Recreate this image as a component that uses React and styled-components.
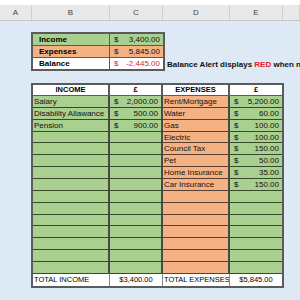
import React from 'react';
import styled, { createGlobalStyle } from 'styled-components';

const GlobalStyle = createGlobalStyle`
	html, body {
		margin: 0;
		padding: 0;
		background: #dde9f5;
		width: 300px;
		height: 300px;
		overflow: hidden;
		font-family: "Liberation Sans", Arial, sans-serif;
	}
`;

const COLS = '32px 78px 53px 67px 53px 1fr';

const Page = styled.div`
	width: 300px;
	height: 300px;
	overflow: hidden;
	background: #dde9f5;
`;

const TopStrip = styled.div`
	height: 5px;
	background: #ffffff;
`;

const ColumnBar = styled.div`
	display: grid;
	grid-template-columns: ${COLS};
	height: 15px;
	background: #e9e9e9;
	border-bottom: 1px solid #c8c8c8;
`;

const ColumnLetter = styled.div`
	display: flex;
	align-items: center;
	justify-content: center;
	font-size: 8px;
	color: #444;
	border-right: 1px solid #cfcfcf;
`;

const Sheet = styled.div`
	padding: 11px 0 0 31px;
	display: flex;
	flex-direction: column;
	gap: 12px;
`;

const SummaryRow = styled.div`
	display: flex;
	align-items: flex-end;
`;

const Summary = styled.div`
	display: grid;
	grid-template-columns: 77px 53px;
	border: 2px solid #5b5b5b;
	width: max-content;
`;

const SummaryLabel = styled.div`
	height: 11px;
	padding-left: 6px;
	font-size: 8px;
	font-weight: bold;
	line-height: 11px;
	background: ${p => p.$bg};
	border-right: 1px solid #5b5b5b;
	border-bottom: ${p => (p.$last ? 'none' : '1px solid #5b5b5b')};
`;

const Money = styled.div`
	height: 11px;
	display: flex;
	justify-content: space-between;
	padding: 0 3px 0 4px;
	font-size: 8px;
	line-height: 11px;
	color: ${p => (p.$red ? '#d9262e' : '#111')};
	background: ${p => p.$bg};
	border-bottom: ${p => (p.$last ? 'none' : `1px solid ${p.$line || '#5b5b5b'}`)};
	white-space: nowrap;
`;

const Note = styled.div`
	padding: 0 0 0 2px;
	height: 12px;
	line-height: 12px;
	font-size: 8px;
	font-weight: bold;
	white-space: nowrap;
	color: #111;
`;

const Red = styled.span`
	color: #e0202a;
`;

const Ledger = styled.div`
	display: grid;
	grid-template-columns: 77px 53px 67px 52px;
	border: 2px solid #5b5b5b;
	width: max-content;
`;

const Head = styled.div`
	height: 10px;
	line-height: 10px;
	text-align: center;
	font-size: 7.5px;
	font-weight: bold;
	background: #fff;
	border-right: ${p => (p.$end ? 'none' : '2px solid #5b5b5b')};
	border-bottom: 1px solid #5b5b5b;
`;

const Cell = styled.div`
	height: 10.87px;
	line-height: 11px;
	padding-left: 1px;
	font-size: 8px;
	color: #111;
	white-space: nowrap;
	overflow: hidden;
	background: ${p => p.$bg};
	border-right: 2px solid #4a4a4a;
	border-bottom: 1px solid ${p => p.$line};
`;

const Amount = styled(Money)`
	height: 10.87px;
	border-right: ${p => (p.$end ? 'none' : '2px solid #4a4a4a')};
`;

const Total = styled.div`
	height: 12px;
	line-height: 12px;
	font-size: 7.5px;
	background: #fff;
	padding-left: ${p => (p.$center ? 0 : 1)}px;
	text-align: ${p => (p.$center ? 'center' : 'left')};
	white-space: nowrap;
	overflow: hidden;
	border-right: ${p => (p.$end ? 'none' : '1px solid #8a8a8a')};
`;

const GREEN = '#a9d08e';
const ORANGE = '#f4b183';
const GREEN_LINE = '#374a2c';
const ORANGE_LINE = '#5a4030';

const income = [
	['Salary', '2,000.00'],
	['Disability Allawance', '500.00'],
	['Pension', '900.00'],
];

const expenses = [
	['Rent/Mortgage', '5,200.00'],
	['Water', '60.00'],
	['Gas', '100.00'],
	['Electric', '100.00'],
	['Council Tax', '150.00'],
	['Pet', '50.00'],
	['Home Insurance', '35.00'],
	['Car Insurance', '150.00'],
];

const ROWS = 15;

const App = () => {
	const rows = Array.from({ length: ROWS }, (_, i) => ({
		inc: income[i],
		exp: expenses[i],
	}));

	return (
		<Page>
			<GlobalStyle />
			<TopStrip />
			<ColumnBar>
				{['A', 'B', 'C', 'D', 'E', ''].map(l => (
					<ColumnLetter key={l}>{l}</ColumnLetter>
				))}
			</ColumnBar>
			<Sheet>
				<SummaryRow>
					<Summary>
						<SummaryLabel $bg={GREEN}>Income</SummaryLabel>
						<Money $bg={GREEN}><span>$</span><span>3,400.00</span></Money>
						<SummaryLabel $bg={ORANGE}>Expenses</SummaryLabel>
						<Money $bg={ORANGE}><span>$</span><span>5,845.00</span></Money>
						<SummaryLabel $bg="#fff" $last>Balance</SummaryLabel>
						<Money $bg="#fff" $red $last><span>$</span><span>-2,445.00</span></Money>
					</Summary>
					<Note>
						Balance Alert displays <Red>RED</Red> when negative
					</Note>
				</SummaryRow>

				<Ledger>
					<Head>INCOME</Head>
					<Head>£</Head>
					<Head>EXPENSES</Head>
					<Head $end>£</Head>
					{rows.map((r, i) => (
						<React.Fragment key={i}>
							<Cell $bg={GREEN} $line={GREEN_LINE}>{r.inc ? r.inc[0] : ''}</Cell>
							<Amount $bg={GREEN} $line={GREEN_LINE}>
								<span>{r.inc ? '$' : ''}</span>
								<span>{r.inc ? r.inc[1] : ''}</span>
							</Amount>
							<Cell $bg={ORANGE} $line={ORANGE_LINE}>{r.exp ? r.exp[0] : ''}</Cell>
							<Amount $bg={GREEN} $line={GREEN_LINE} $end>
								<span>{r.exp ? '$' : ''}</span>
								<span>{r.exp ? r.exp[1] : ''}</span>
							</Amount>
						</React.Fragment>
					))}
					<Total>TOTAL INCOME</Total>
					<Total $center>$3,400.00</Total>
					<Total>TOTAL EXPENSES</Total>
					<Total $center $end>$5,845.00</Total>
				</Ledger>
			</Sheet>
		</Page>
	);
};

export default App;
